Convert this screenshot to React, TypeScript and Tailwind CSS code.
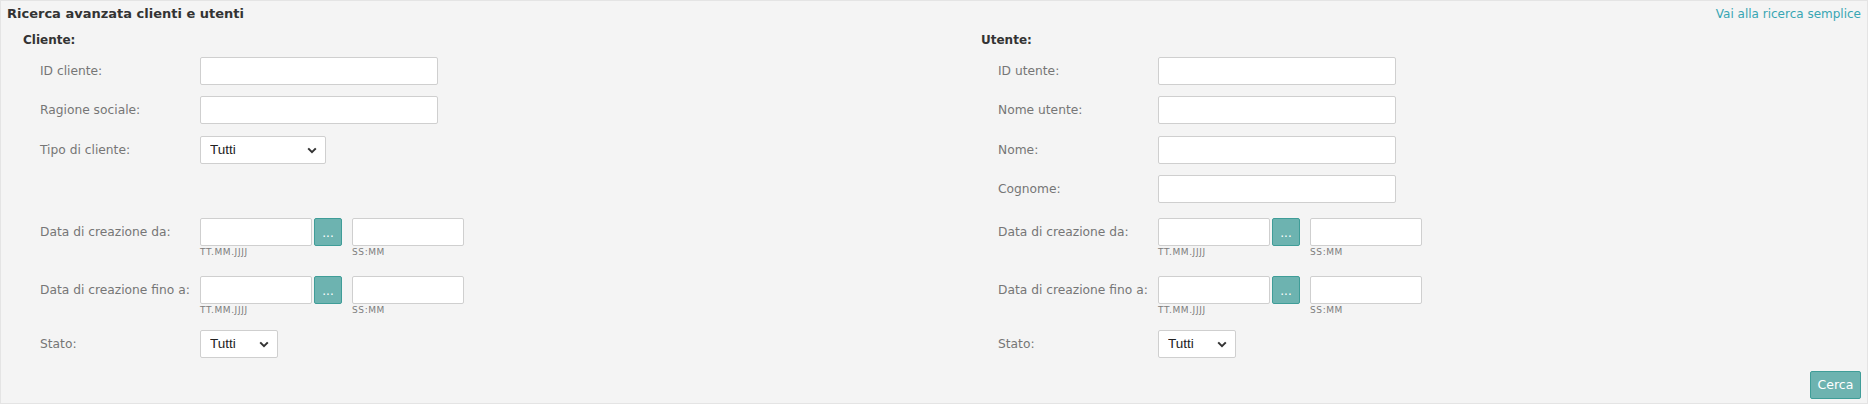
import React from "react";

const font = { fontFamily: '"DejaVu Sans", Verdana, sans-serif' };

function Chevron() {
  return (
    <svg width="10" height="7" viewBox="0 0 10 7" className="absolute right-[9px] top-[11px] pointer-events-none">
      <path d="M1.2 1.4 L5 5.2 L8.8 1.4" fill="none" stroke="#333" strokeWidth="2" />
    </svg>
  );
}

function Select({ w }: { w: string }) {
  return (
    <div className={`relative h-[28px] ${w}`}>
      <select
        className="h-[28px] w-full appearance-none rounded-[2px] border border-[#cfcfcf] bg-white pl-[9px] text-[13.5px] text-[#222] outline-none"
        style={{ fontFamily: '"Liberation Sans", Arial, sans-serif' }}
        defaultValue="Tutti"
      >
        <option>Tutti</option>
      </select>
      <Chevron />
    </div>
  );
}

function TextInput() {
  return <input type="text" className="h-[28px] w-[238px] rounded-[2px] border border-[#cfcfcf] bg-white outline-none" />;
}

function Label({ children }: { children: React.ReactNode }) {
  return <div className="w-[160px] shrink-0 text-[12.25px] leading-[16px] text-[#767676]">{children}</div>;
}

function Row({ label, children, mt }: { label: string; children: React.ReactNode; mt: string }) {
  return (
    <div className={`flex h-[28px] items-center pl-[17px] ${mt}`}>
      <Label>{label}</Label>
      {children}
    </div>
  );
}

function Hint({ children }: { children: React.ReactNode }) {
  return <div className="mt-[1px] text-[9px] leading-[11px] tracking-[0.6px] text-[#7d7d7d]">{children}</div>;
}

function DateRow({ label, mt }: { label: string; mt: string }) {
  return (
    <div className={`flex items-start pl-[17px] ${mt}`}>
      <div className="flex h-[28px] items-center">
        <Label>{label}</Label>
      </div>
      <div className="flex items-start">
        <div className="flex flex-col">
          <div className="flex h-[28px]">
            <input type="text" className="h-[28px] w-[112px] rounded-[2px] border border-[#cfcfcf] bg-white outline-none" />
            <button className="ml-[2px] flex h-[28px] w-[28px] items-end justify-center rounded-[2px] border border-[#3f9d98] bg-[#6db3b0] pb-[6px] text-[12px] leading-[12px] text-white">
              ...
            </button>
          </div>
          <Hint>TT.MM.JJJJ</Hint>
        </div>
        <div className="ml-[10px] flex flex-col">
          <input type="text" className="h-[28px] w-[112px] rounded-[2px] border border-[#cfcfcf] bg-white outline-none" />
          <Hint>SS:MM</Hint>
        </div>
      </div>
    </div>
  );
}

export default function App() {
  return (
    <div className="h-[407px] w-full bg-white" style={font}>
      <div className="h-[404px] w-[1868px] border border-[#e4e4e4] bg-[#f4f4f4] pl-[6px] pr-[6px]">
        <div className="flex h-[24px] items-start justify-between pt-[5px]">
          <div className="text-[13px] font-bold leading-[16px] text-[#333]">Ricerca avanzata clienti e utenti</div>
          <a href="#" className="text-[12px] leading-[16px] text-[#38a6b3]">Vai alla ricerca semplice</a>
        </div>
        <div className="flex pl-[16px]">
          <div className="w-[958px] flex-col">
            <div className="mt-[7px] text-[12px] font-bold leading-[16px] text-[#333]">Cliente:</div>
            <Row label="ID cliente:" mt="mt-[9px]"><TextInput /></Row>
            <Row label="Ragione sociale:" mt="mt-[11px]"><TextInput /></Row>
            <Row label="Tipo di cliente:" mt="mt-[12px]"><Select w="w-[126px]" /></Row>
            <div className="mt-[11px] h-[28px]" />
            <DateRow label="Data di creazione da:" mt="mt-[15px]" />
            <DateRow label="Data di creazione fino a:" mt="mt-[18px]" />
            <Row label="Stato:" mt="mt-[14px]"><Select w="w-[78px]" /></Row>
          </div>
          <div className="flex-1 flex-col">
            <div className="mt-[7px] text-[12px] font-bold leading-[16px] text-[#333]">Utente:</div>
            <Row label="ID utente:" mt="mt-[9px]"><TextInput /></Row>
            <Row label="Nome utente:" mt="mt-[11px]"><TextInput /></Row>
            <Row label="Nome:" mt="mt-[12px]"><TextInput /></Row>
            <Row label="Cognome:" mt="mt-[11px]"><TextInput /></Row>
            <DateRow label="Data di creazione da:" mt="mt-[15px]" />
            <DateRow label="Data di creazione fino a:" mt="mt-[18px]" />
            <Row label="Stato:" mt="mt-[14px]"><Select w="w-[78px]" /></Row>
          </div>
        </div>
        <div className="mt-[13px] flex justify-end">
          <button className="h-[28px] w-[51px] rounded-[2px] border border-[#3f9d98] bg-[#6db3b0] text-[12.5px] text-white">Cerca</button>
        </div>
      </div>
    </div>
  );
}
